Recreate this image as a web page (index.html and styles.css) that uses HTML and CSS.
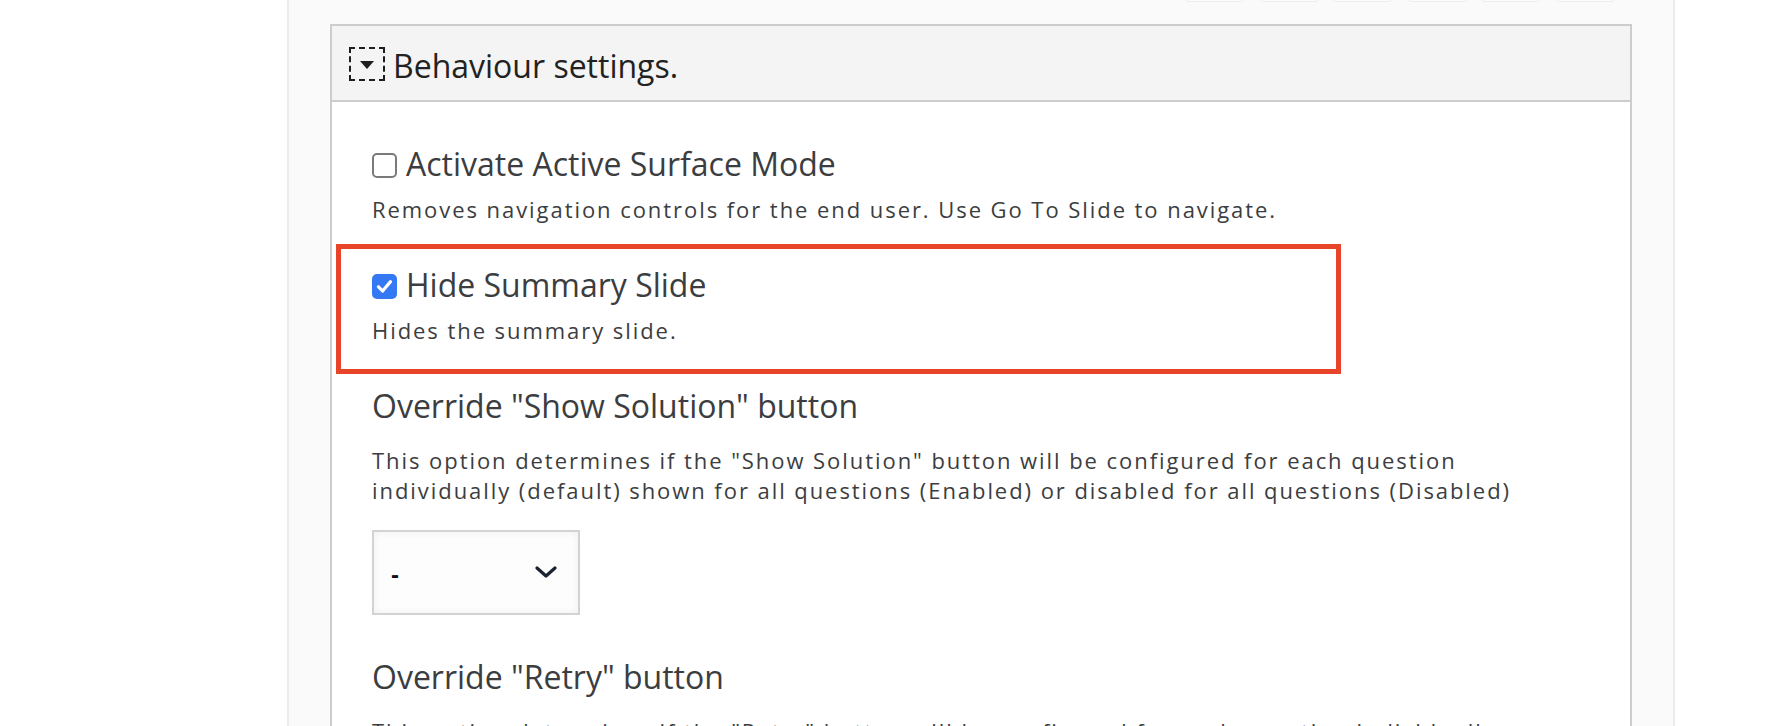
FILE: index.html
```html
<!DOCTYPE html>
<html lang="en">
<head>
<meta charset="utf-8">
<title>Behaviour settings</title>
<link rel="stylesheet" href="styles.css">
</head>
<body>
<div class="column">
  <div class="toolbar">
    <span class="tb-btn"></span><span class="tb-btn"></span><span class="tb-btn"></span>
    <span class="tb-btn"></span><span class="tb-btn"></span><span class="tb-btn"></span>
  </div>
  <section class="group">
    <header class="group-head">
      <span class="toggle"><svg width="14" height="8" viewBox="0 0 14 8"><path d="M0 0H14L7 8Z" fill="#1e1e1e"/></svg></span>
      <span class="group-title">Behaviour settings.</span>
    </header>
    <div class="group-body">
      <div class="field field-bool">
        <label class="bool-label">
          <span class="checkbox"></span>
          <span>Activate Active Surface Mode</span>
        </label>
        <div class="desc">Removes navigation controls for the end user. Use Go To Slide to navigate.</div>
      </div>
      <div class="field field-bool highlighted">
        <div class="highlight"></div>
        <label class="bool-label">
          <span class="checkbox checked"><svg width="25" height="25" viewBox="0 0 25 25"><path d="M6.5 12.8L10.6 17L18.5 7.6" fill="none" stroke="#fff" stroke-width="3.2" stroke-linecap="round" stroke-linejoin="round"/></svg></span>
          <span>Hide Summary Slide</span>
        </label>
        <div class="desc">Hides the summary slide.</div>
      </div>
      <div class="field field-select">
        <div class="label">Override "Show Solution" button</div>
        <div class="desc">This option determines if the "Show Solution" button will be configured for each question individually (default) shown for all questions (Enabled) or disabled for all questions (Disabled)</div>
        <div class="select">
          <span class="select-value">-</span>
          <svg class="chevron" width="22" height="12" viewBox="0 0 22 12"><path d="M2 2L11 10L20 2" fill="none" stroke="#1b2233" stroke-width="3.2" stroke-linecap="round" stroke-linejoin="round"/></svg>
        </div>
      </div>
      <div class="field field-select">
        <div class="label">Override "Retry" button</div>
        <div class="desc">This option determines if the "Retry" button will be configured for each question individually (default) shown for all questions (Enabled) or disabled for all questions (Disabled)</div>
      </div>
    </div>
  </section>
</div>
</body>
</html>
```
FILE: styles.css
```css
html, body {
  margin: 0;
  padding: 0;
  background: #ffffff;
  overflow: hidden;
}

body {
  font-family: "Open Sans", "Liberation Sans", sans-serif;
  color: #3c3d40;
}

.column {
  margin-left: 287px;
  width: 1388px;
  box-sizing: border-box;
  min-height: 726px;
  background: #fafafa;
  border-left: 2px solid #ececec;
  border-right: 2px solid #ececec;
  padding: 0 41px 0 41px;
}

.toolbar {
  display: flex;
  justify-content: flex-end;
  align-items: flex-end;
  gap: 12px;
  height: 2px;
  margin-bottom: 22px;
  padding-right: 16px;
}

.tb-btn {
  flex: none;
  width: 62px;
  height: 40px;
  box-sizing: border-box;
  border: 1px solid #eeeeee;
  border-radius: 5px;
  background: #fcfcfc;
}

.group {
  border: 2px solid #cdcdcd;
  background: #ffffff;
}

.group-head {
  display: flex;
  align-items: flex-start;
  gap: 8px;
  height: 76px;
  box-sizing: border-box;
  padding: 21px 0 17px 17px;
  background: #f4f4f4;
  border-bottom: 2px solid #cdcdcd;
}

.toggle {
  flex: none;
  width: 36px;
  height: 34px;
  box-sizing: border-box;
  border: 2px dashed #1e1e1e;
  display: flex;
  align-items: center;
  justify-content: center;
  padding-top: 2px;
}

.group-title {
  font-size: 32px;
  line-height: 38px;
  color: #222222;
}

.group-body {
  padding: 43px 40px 40px 40px;
}

.field-bool {
  margin-bottom: 41.8px;
}

.field-select {
  margin-bottom: 42.5px;
}

.highlighted {
  position: relative;
}

.highlight {
  position: absolute;
  top: -22.5px;
  left: -36px;
  width: 1005px;
  height: 130px;
  box-sizing: border-box;
  border: 5px solid #e8442a;
  pointer-events: none;
}

.bool-label {
  display: flex;
  align-items: center;
  gap: 9px;
  font-size: 32px;
  line-height: 38px;
  color: #3c3d40;
}

.checkbox {
  flex: none;
  width: 25px;
  height: 25px;
  box-sizing: border-box;
  border: 2px solid #7a7a7a;
  border-radius: 5px;
  background: #ffffff;
  margin-top: 2px;
}

.checkbox.checked {
  border: none;
  background: #3479f3;
}

.checkbox svg {
  display: block;
}

.label {
  font-size: 32px;
  line-height: 38px;
  color: #3c3d40;
}

.desc {
  font-size: 22px;
  line-height: 30px;
  letter-spacing: 1.94px;
  color: #3c3d40;
}

.field-bool .desc {
  margin-top: 11.3px;
}

.field-select .desc {
  margin-top: 20px;
}

.select {
  margin-top: 25px;
  width: 208px;
  height: 85px;
  box-sizing: border-box;
  border: 2px solid #d3d3d3;
  background: #fdfdfd;
  box-shadow: inset 0 0 8px rgba(0, 0, 0, 0.06);
  display: flex;
  align-items: center;
  justify-content: space-between;
  padding: 4px 21px 0 17px;
}

.select-value {
  font-size: 24px;
  font-weight: bold;
  color: #111111;
  font-family: "Liberation Sans", sans-serif;
}

.chevron {
  display: block;
  margin-top: -6px;
}
```
